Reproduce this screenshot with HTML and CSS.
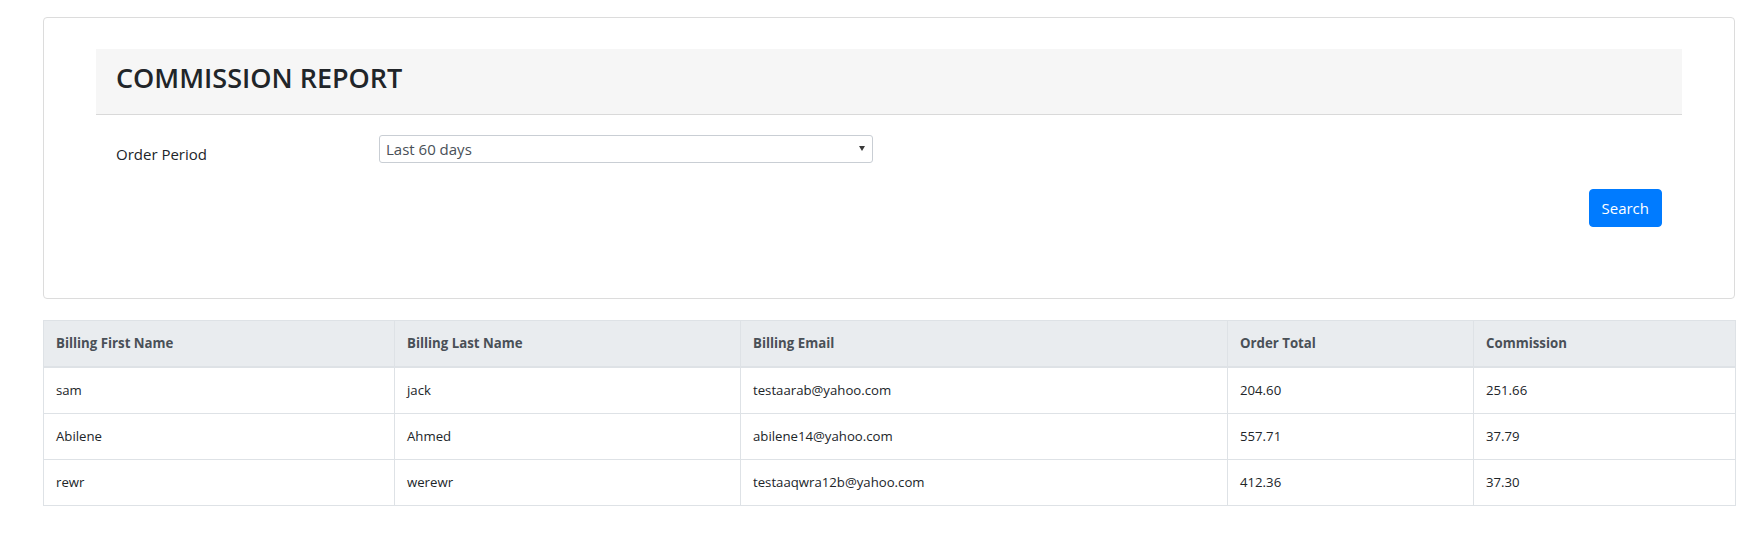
FILE: index.html
```html
<!DOCTYPE html>
<html lang="en">
<head>
<meta charset="utf-8">
<title>Commission Report</title>
<link rel="stylesheet" href="styles.css">
</head>
<body>
<div class="page">
  <section class="card">
    <header class="card-header">
      <h3 class="title">COMMISSION REPORT</h3>
    </header>
    <form class="filter">
      <div class="form-row">
        <label class="form-label" for="period">Order Period</label>
        <div class="select-wrap">
          <select id="period" class="select">
            <option>Last 60 days</option>
          </select>
          <svg class="select-arrow" width="6" height="5" viewBox="0 0 6 5" aria-hidden="true"><polygon points="0,0 6,0 3,5" fill="#3a3a3a"/></svg>
        </div>
      </div>
      <div class="actions">
        <button type="button" class="btn">Search</button>
      </div>
    </form>
  </section>

  <table class="report">
    <colgroup>
      <col class="c1"><col class="c2"><col class="c3"><col class="c4"><col class="c5">
    </colgroup>
    <thead>
      <tr>
        <th>Billing First Name</th>
        <th>Billing Last Name</th>
        <th>Billing Email</th>
        <th>Order Total</th>
        <th>Commission</th>
      </tr>
    </thead>
    <tbody>
      <tr><td>sam</td><td>jack</td><td>testaarab@yahoo.com</td><td>204.60</td><td>251.66</td></tr>
      <tr><td>Abilene</td><td>Ahmed</td><td>abilene14@yahoo.com</td><td>557.71</td><td>37.79</td></tr>
      <tr><td>rewr</td><td>werewr</td><td>testaaqwra12b@yahoo.com</td><td>412.36</td><td>37.30</td></tr>
    </tbody>
  </table>
</div>
</body>
</html>
```

FILE: styles.css
```css
* { box-sizing: border-box; }

html, body {
  margin: 0;
  background: #ffffff;
}

body {
  font-family: "Open Sans", "Noto Sans", "Liberation Sans", sans-serif;
  color: #212529;
  font-size: 14px;
}

.page {
  padding: 17px 12px 0 43px;
}

.card {
  width: 1692px;
  border: 1px solid #dcdcdc;
  border-radius: 4px;
  padding: 31px 52px 71px;
  background: #fff;
}

.card-header {
  background: #f6f6f6;
  border-bottom: 1px solid #d9d9d9;
  padding: 12px 20px 20px;
}

.title {
  margin: 0;
  font-size: 27px;
  line-height: 33px;
  font-weight: 600;
  color: #212529;
}

.filter {
  margin: 0;
}

.form-row {
  display: grid;
  grid-template-columns: 283px 494px;
  margin-top: 20px;
  align-items: start;
}

.form-label {
  height: 28px;
  padding: 8px 0 0 20px;
  font-size: 15px;
  line-height: 22px;
  color: #212529;
}

.select-wrap {
  position: relative;
  height: 28px;
}

.select {
  display: block;
  width: 100%;
  height: 28px;
  margin: 0;
  padding: 0 20px 0 6px;
  border: 1px solid #c9ced4;
  border-radius: 3px;
  background: #fff;
  font-family: inherit;
  font-size: 15px;
  line-height: 26px;
  color: #495057;
  -webkit-appearance: none;
  appearance: none;
  outline: none;
}

.select-arrow {
  position: absolute;
  right: 8px;
  top: 11px;
}

.actions {
  display: flex;
  justify-content: flex-end;
  margin-top: 26px;
  padding-right: 20px;
}

.btn {
  height: 38px;
  padding: 0 12px;
  border: 1px solid #007bff;
  border-radius: 4px;
  background: #007bff;
  color: #fff;
  font-family: inherit;
  font-size: 15px;
  line-height: 36px;
  cursor: pointer;
}

.report {
  width: 1692px;
  margin-top: 21px;
  border-collapse: collapse;
  table-layout: fixed;
  font-size: 13.2px;
}

.report .c1 { width: 351px; }
.report .c2 { width: 346px; }
.report .c3 { width: 487px; }
.report .c4 { width: 246px; }
.report .c5 { width: 262px; }

.report th,
.report td {
  border: 1px solid #dee2e6;
  padding: 12px 12px;
  line-height: 21px;
  text-align: left;
  vertical-align: top;
}

.report th {
  background: #e9ecef;
  color: #495057;
  font-weight: 700;
  font-size: 13.25px;
  border-bottom-width: 2px;
}

.report td {
  color: #212529;
}
```
